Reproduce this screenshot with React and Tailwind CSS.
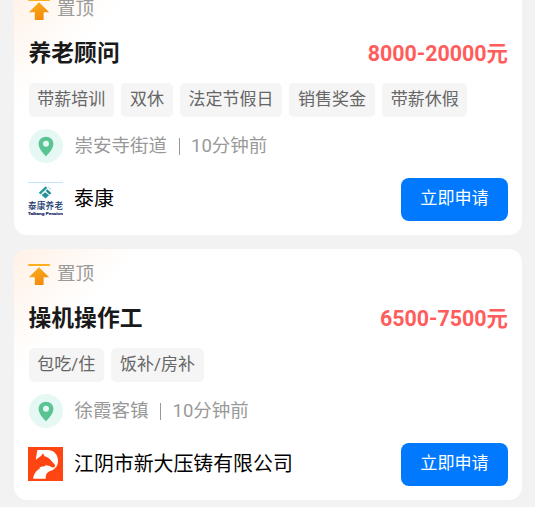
const jobs = [
  {
    title: '养老顾问',
    salary: '8000-20000元',
    tags: ['带薪培训', '双休', '法定节假日', '销售奖金', '带薪休假'],
    area: '崇安寺街道',
    time: '10分钟前',
    company: '泰康',
    Logo: TaikangLogo,
  },
  {
    title: '操机操作工',
    salary: '6500-7500元',
    tags: ['包吃/住', '饭补/房补'],
    area: '徐霞客镇',
    time: '10分钟前',
    company: '江阴市新大压铸有限公司',
    Logo: HorseLogo,
  },
];

function TopIcon() {
  return (
    <svg width="22" height="22" viewBox="0 0 22 22" className="shrink-0 -ml-[0.5px]">
      <defs>
        <linearGradient id="topFill" x1="0" y1="0" x2="0.6" y2="1">
          <stop offset="0" stopColor="#f9b21d" />
          <stop offset="1" stopColor="#f58a0b" />
        </linearGradient>
      </defs>
      <rect x="0.3" y="0" width="21.5" height="2" fill="#fbb01e" />
      <path d="M11 3.2 21.2 13.2H15.6V21.1H6.8V13.2H0.9Z" fill="url(#topFill)" />
    </svg>
  );
}

function PinIcon() {
  return (
    <div className="w-[34px] h-[34px] rounded-full bg-[#e6f8f3] flex items-center justify-center shrink-0">
      <svg width="16" height="21" viewBox="0 0 16 21">
        <path
          d="M8 0.7C3.8 0.7 0.6 3.8 0.6 7.8c0 5 4.4 9.3 7.4 12.6 3-3.3 7.4-7.6 7.4-12.6C15.4 3.8 12.2 0.7 8 0.7Z"
          fill="#5ac394"
        />
        <circle cx="8" cy="7.7" r="3" fill="#e6f8f3" />
      </svg>
    </div>
  );
}

function TaikangLogo() {
  return (
    <svg width="35" height="34" viewBox="0 0 35 34" className="shrink-0 -ml-[0.5px] -mt-0.5">
      <rect width="35" height="34" fill="#fdfeff" />
      <rect width="35" height="1" fill="#c3e4fb" />
      <path d="M10.8 10.7 17.7 4.3 19.3 5.9 12.5 12.5Z" fill="#279b9b" />
      <path d="M19.3 7.2 23.3 11 21.6 12.7 17.7 8.9Z" fill="#238d96" />
      <path d="M13.6 12.9 17.2 10.2 21 13.3 17.5 16.5Z" fill="#268f99" />
      <path d="M20.5 5.2 22.8 7.5" stroke="#92ced0" strokeWidth="1" />
      <text
        x="0"
        y="26.8"
        textLength="35"
        fontSize="8.6"
        fontWeight="500"
        fill="#17366f"
        className="font-['Noto_Sans_CJK_SC',sans-serif]"
      >
        泰康养老
      </text>
      <text
        x="0"
        y="32.6"
        textLength="35"
        lengthAdjust="spacingAndGlyphs"
        fontSize="4.3"
        fontWeight="700"
        fill="#16235f"
        stroke="#16235f"
        strokeWidth="0.2"
        className="font-['Liberation_Sans',sans-serif]"
      >
        Taikang Pension
      </text>
    </svg>
  );
}

function HorseLogo() {
  return (
    <svg width="35" height="34" viewBox="0 0 35 34" className="shrink-0 -ml-[0.5px] -mt-0.5">
      <rect width="35" height="34" fill="#ff4612" />
      <path
        d="M9.3 3H19.5C26 3 30 7.7 30 14C30 20 26 22.8 21.5 24.3C18.5 25.5 17.6 28 17.6 31.8H5.2C5.5 27 8.5 23.5 12 21.3L7.8 12.7Z"
        fill="#fff"
      />
      {/* Head of the horse, open to the left side */}
      <path
        d="M4 13.5 7.8 12.7 13.2 8.7 15 6.2 16.5 9.2C20 10.2 22 11.8 23.7 14.2L27 17.8 26.6 20.2 24.5 20.6 21.5 18.9C19.8 18.5 18.3 18.6 17 18.2L17.3 19.3C13.5 19.2 10.5 20.5 7 24L4 22Z"
        fill="#ff4612"
      />
    </svg>
  );
}

function JobCard({ job }) {
  const { title, salary, tags, area, time, company, Logo } = job;

  return (
    <div className="h-[251px] shrink-0 rounded-[13px] bg-white bg-[linear-gradient(135deg,#fff1e6_0px,#ffffff_90px)] pl-[14.5px] pr-3.5 pt-[15px]">
      {/* Pinned label */}
      <div className="flex h-[22px] items-center gap-[7px] text-[18.5px] text-[#999999]">
        <TopIcon />
        <span className="h-[22px] leading-[21px]">置顶</span>
      </div>

      {/* Title and salary */}
      <div className="mt-4 flex h-8 items-center justify-between">
        <h2 className="text-[22.8px] font-bold text-[#1a1a1a] pt-[3px]">{title}</h2>
        <span className="text-[21.4px] font-bold text-[#ff5c5c] pt-0.5">{salary}</span>
      </div>

      <div className="mt-3.5 flex gap-[7px]">
        {tags.map((tag) => (
          <span
            key={tag}
            className="flex h-[34px] items-center rounded-[5px] bg-[#f5f5f5] px-[8.8px] text-[17px] text-[#666666] whitespace-nowrap"
          >
            {tag}
          </span>
        ))}
      </div>

      {/* Location and publish time */}
      <div className="mt-3 flex h-[34px] items-center text-[18.5px] text-[#999999]">
        <PinIcon />
        <span className="ml-3 pt-0.5">{area}</span>
        <span className="mx-[11.5px] h-[17px] w-px bg-[#999999]" />
        <span className="pt-0.5">{time}</span>
      </div>

      {/* Company */}
      <div className="mt-[15px] flex h-[43px] items-center">
        <Logo />
        <span className="ml-[11px] text-[19.9px] text-black">{company}</span>
        <button className="ml-auto h-[43px] w-[107px] rounded-[8px] bg-[#0079ff] pb-0.5 text-[17.1px] text-white">
          立即申请
        </button>
      </div>
    </div>
  );
}

export default function App() {
  return (
    <div className="h-[507px] overflow-hidden bg-[#f2f2f2] font-[Roboto,'Noto_Sans_CJK_SC',sans-serif]">
      <div className="-mt-4 ml-3.5 flex w-[508px] flex-col gap-3.5">
        {jobs.map((job) => (
          <JobCard key={job.title} job={job} />
        ))}
      </div>
    </div>
  );
}
